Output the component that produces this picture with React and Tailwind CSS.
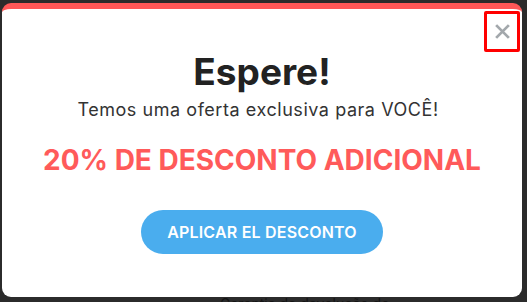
export default function App() {
  return (
    <div
      className="w-[527px] h-[302px] overflow-hidden bg-[#2b2b2b] flex flex-col"
      style={{ fontFamily: "Inter, 'Open Sans', sans-serif" }}
    >
      <div className="pt-[3px] pl-[2px]">
        <div className="relative w-[520px] h-[294px] bg-white rounded-[9px] border-t-[6px] border-[#ff5757] flex flex-col items-center">
          <button className="absolute top-[2px] right-[2px] w-[36px] h-[41px] border-[3px] border-[#ff0000] rounded-[2px] flex items-center justify-center">
            <svg width="17" height="17" viewBox="0 0 16 16" fill="none">
              <path d="M2 2L14 14M14 2L2 14" stroke="#a3a8ac" strokeWidth="2.6" strokeLinecap="butt" />
            </svg>
          </button>
          <h1 className="mt-[41px] text-[37px] leading-[44px] font-bold text-[#222222]">Espere!</h1>
          <p className="mt-[4px] pr-[8px] text-[18px] leading-[24px] text-[#333333] tracking-[0.55px]">
            Temos uma oferta exclusiva para VOCÊ!
          </p>
          <p className="mt-[21px] text-[28px] leading-[34px] font-bold text-[#ff5a5a]">
            20% DE DESCONTO ADICIONAL
          </p>
          <button className="mt-[33px] w-[242px] h-[44px] rounded-full bg-[#4aadee] text-white text-[16px] font-semibold tracking-[0.2px]">
            APLICAR EL DESCONTO
          </button>
        </div>
      </div>
      <div className="flex items-center pl-[220px] gap-[14px] text-[14px] leading-[16px] text-[#141414] mt-[-1px]">
        <span>Garantia de devolução do dinheiro</span>
        <span className="w-[16px] h-[10px] border-2 border-[#141414] rounded-[2px]"></span>
        <span className="ml-[6px]">Serviço</span>
      </div>
    </div>
  );
}
